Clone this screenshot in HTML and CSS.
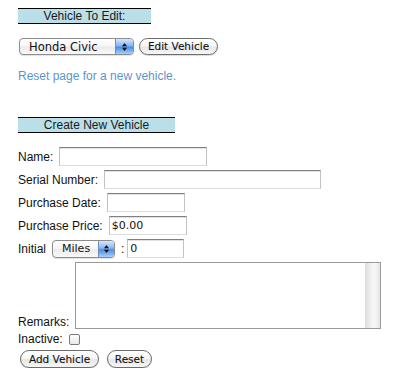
FILE: index.html
```html
<!DOCTYPE html>
<html>
<head>
<meta charset="utf-8">
<link rel="stylesheet" href="styles.css">
</head>
<body>
<div class="page">
  <div class="bar bar-edit">Vehicle To Edit:</div>
  <div class="row pick-row">
    <span class="sel sel-vehicle">
      <select class="sel-native"><option>Honda Civic</option></select>
      <span class="sel-arrows"><svg width="7" height="10" viewBox="0 0 7 10"><polygon points="1,4.2 3.5,1 6,4.2" fill="#111"/><polygon points="1,5.8 3.5,9 6,5.8" fill="#111"/></svg></span>
    </span>
    <button class="btn btn-edit">Edit Vehicle</button>
  </div>
  <a class="reset-link" href="#">Reset page for a new vehicle.</a>
  <div class="bar bar-create">Create New Vehicle</div>
  <div class="form">
    <div class="row frow"><label>Name:</label><input class="txt w-name" type="text"></div>
    <div class="row frow"><label>Serial Number:</label><input class="txt w-serial" type="text"></div>
    <div class="row frow"><label>Purchase Date:</label><input class="txt w-date" type="text"></div>
    <div class="row frow"><label>Purchase Price:</label><input class="txt w-price" type="text" value="$0.00"></div>
    <div class="row frow"><label>Initial</label>
      <span class="sel sel-miles">
        <select class="sel-native"><option>Miles</option></select>
        <span class="sel-arrows"><svg width="7" height="10" viewBox="0 0 7 10"><polygon points="1,4.2 3.5,1 6,4.2" fill="#111"/><polygon points="1,5.8 3.5,9 6,5.8" fill="#111"/></svg></span>
      </span>
      <span class="colon">:</span><input class="txt w-init" type="text" value="0"></div>
    <div class="row remarks-row"><label>Remarks:</label><textarea class="remarks"></textarea></div>
    <div class="row inactive-row"><label>Inactive:</label><input class="chk" type="checkbox"></div>
    <div class="row btn-row"><button class="btn btn-add">Add Vehicle</button><button class="btn btn-reset">Reset</button></div>
  </div>
</div>
</body>
</html>
```

FILE: styles.css
```css
html, body {
  margin: 0;
  padding: 0;
  background: #fff;
}
body {
  font-family: "Liberation Sans", Arial, sans-serif;
  font-size: 12px;
  color: #111;
}
.page {
  padding: 8px 0 0 18px;
  display: flex;
  flex-direction: column;
  align-items: flex-start;
}
.bar {
  box-sizing: border-box;
  height: 16px;
  line-height: 14px;
  border-top: 1px solid #000;
  border-bottom: 1px solid #000;
  background: #bbdfe9;
  text-align: center;
  font-size: 12px;
  color: #1a1a1a;
}
.bar-edit { width: 133px; }
.bar-create { width: 157px; margin-top: 34px; }
.row {
  display: flex;
  align-items: center;
  gap: 6px;
}
.pick-row {
  margin-top: 14px;
  height: 17px;
  gap: 5px;
  margin-left: 1px;
}
.sel {
  box-sizing: border-box;
  display: flex;
  border: 1px solid #8c8c8c;
  border-radius: 4px;
  overflow: hidden;
  background: linear-gradient(#ffffff, #f7f7f7 45%, #ebebeb 55%, #f9f9f9);
  box-shadow: 0 1px 1px rgba(0,0,0,0.12);
}
.sel-native {
  -webkit-appearance: none;
  appearance: none;
  flex: 1;
  min-width: 0;
  border: 0;
  background: transparent;
  font-family: "DejaVu Sans", sans-serif;
  color: #111;
  padding: 0 0 0 9px;
  margin: 0;
  outline: none;
}
.sel-arrows {
  display: flex;
  align-items: center;
  justify-content: center;
  border-left: 1px solid #6f8fba;
  background: linear-gradient(#d6e8fb, #84b6f0 45%, #4a8de6 55%, #a6d0fb);
}
.sel-vehicle { width: 115px; height: 17px; }
.sel-vehicle .sel-native { font-size: 11.5px; }
.sel-vehicle .sel-arrows { width: 17px; }
.sel-miles { width: 63px; height: 18px; }
.sel-miles .sel-native { font-size: 11px; padding-left: 9px; }
.sel-miles .sel-arrows { width: 15px; }
.btn {
  box-sizing: border-box;
  height: 17px;
  padding: 0;
  margin: 0;
  border: 1px solid #6c6c6c;
  border-radius: 9px;
  background: linear-gradient(#ffffff, #f6f6f6 45%, #e6e6e6 55%, #f7f7f7);
  box-shadow: 0 1px 1px rgba(0,0,0,0.15);
  font-family: "DejaVu Sans", sans-serif;
  font-size: 10.5px;
  -webkit-text-stroke: 0.1px #111;
  color: #111;
  line-height: 15px;
  text-align: center;
}
.btn-edit { width: 79px; }
.reset-link {
  margin-top: 14px;
  line-height: 14px;
  color: #5a96cc;
  text-decoration: none;
}
.form {
  margin-top: 14px;
  display: flex;
  flex-direction: column;
  gap: 4px;
}
.frow { height: 19px; }
.txt {
  box-sizing: border-box;
  height: 19px;
  margin: 0;
  padding: 0 2px;
  border: 1px solid;
  border-color: #808080 #c2c2c2 #dcdcdc #c2c2c2;
  box-shadow: inset 0 1px 0 #e2e2e2;
  font-family: "DejaVu Sans", sans-serif;
  font-size: 11px;
  color: #111;
  outline: none;
}
.w-name { width: 148px; }
.w-serial { width: 217px; }
.w-date { width: 78px; }
.w-price { width: 78px; }
.w-init { width: 57px; }
.colon { margin-right: -3px; }
.remarks-row {
  align-items: flex-end;
}
.remarks-row label { line-height: 13px; }
.remarks {
  box-sizing: border-box;
  width: 306px;
  height: 67px;
  margin: 0;
  border: 1px solid #9a9a9a;
  resize: none;
  outline: none;
  background: linear-gradient(to right, #fff 0, #fff 289px, #dcdcdc 289px, #f4f4f4 296px, #f7f7f7 299px, #e4e4e4 304px);
}
.inactive-row {
  margin-top: -1px;
  height: 14px;
}
.chk {
  -webkit-appearance: none;
  appearance: none;
  box-sizing: border-box;
  width: 11px;
  height: 11px;
  margin: 0;
  border: 1px solid #7a7a7a;
  border-radius: 2px;
  background: linear-gradient(#fdfdfd, #e9e9e9);
}
.btn-row {
  height: 18px;
  gap: 8px;
  margin-left: 2px;
}
.btn-row .btn { height: 18px; line-height: 16px; }
.btn-add { width: 79px; }
.btn-reset { width: 45px; }
```
